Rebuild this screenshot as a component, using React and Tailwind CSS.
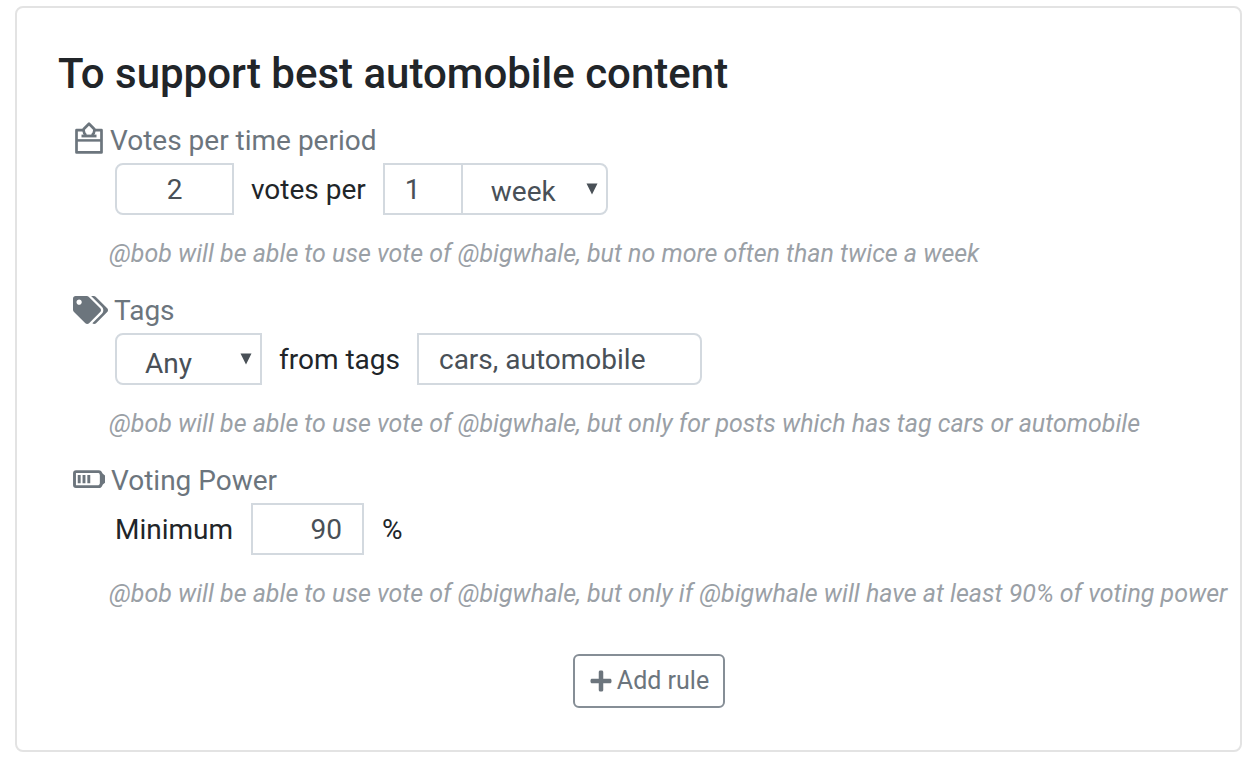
import { FaTags, FaPlus } from "react-icons/fa";

function BallotIcon() {
  return (
    <svg viewBox="0 0 28 32" className="h-8 w-7 shrink-0" fill="none" stroke="currentColor" aria-hidden="true">
      <path d="M8.5 8.2H1.5V30.4H26.5V8.2H19.5" strokeWidth="2.7" strokeLinejoin="round" />
      <path d="M1 18.4H27" strokeWidth="2.5" />
      <path d="M6.5 14H21.5" strokeWidth="2.8" />
      <path d="M11 13.2Q8 10.5 8.8 7L14 1.8L19.2 7Q20 10.5 17 13.2" strokeWidth="2.7" strokeLinejoin="round" />
    </svg>
  );
}

function BatteryIcon() {
  return (
    <svg viewBox="0 0 32 20" className="h-5 w-8 shrink-0" fill="none" stroke="currentColor" aria-hidden="true">
      <path d="M3 1.6H25.5Q28 1.6 28.3 5V13.5Q28 16.6 25.5 16.6H3Q1.5 16.6 1.5 15V3.2Q1.5 1.6 3 1.6Z" strokeWidth="2.9" />
      <path d="M27 3.5H29.5L32 5.5V12.7L29.5 14.7H27Z" fill="currentColor" stroke="none" />
      <path d="M6.2 5V13.2M11 5V13.2M15.8 5V13.2" strokeWidth="2.9" />
    </svg>
  );
}

function Rule({ icon, title, hint, children }) {
  return (
    <section className="mb-6">
      <h2 className="flex h-[34px] items-center text-[28px] text-[#6c757d]">
        {icon}
        <span className="ml-1.5 pt-0.5">{title}</span>
      </h2>
      <div className="mt-1.5 ml-[42px] flex h-[52px] items-stretch text-[28px] text-[#212529]">{children}</div>
      <p className="mt-6 ml-9 text-[25px] leading-[30px] whitespace-nowrap text-[#9aa0a6] italic">{hint}</p>
    </section>
  );
}

function Select({ label, options, className, textClass }) {
  return (
    <div className={"relative border-2 border-[#d3d9df] " + className}>
      <select aria-label={label} className={"size-full appearance-none bg-transparent text-[#495057] outline-none " + textClass}>
        {options.map((o) => (
          <option key={o}>{o}</option>
        ))}
      </select>
      <svg viewBox="0 0 12 12" className="pointer-events-none absolute top-[18px] right-2 size-3" fill="#495057" aria-hidden="true">
        <path d="M0.5 0.5H11.5L6 11.5Z" />
      </svg>
    </div>
  );
}

export default function App() {
  return (
    <main className="bg-white pt-1.5 pr-[18px] pl-[15px] font-['Roboto',sans-serif]">
      <div className="rounded-lg border-2 border-[#e3e3e3] pt-[41px] pb-[42px] pl-[41px]">
        <h1 className="mb-6 text-[42px] leading-[50px] font-medium text-[#212529]">To support best automobile content</h1>
        <div className="pl-[15px]">
          <Rule
            icon={<span className="mr-px mb-1 ml-0.5 flex"><BallotIcon /></span>}
            title="Votes per time period"
            hint="@bob will be able to use vote of @bigwhale, but no more often than twice a week"
          >
            <input aria-label="Number of votes" defaultValue="2" className="w-[119px] rounded-l-lg border-2 border-[#d3d9df] pt-0.5 text-center text-[#495057] outline-none" />
            <span className="flex items-center px-[17px] pt-0.5">votes per</span>
            <input aria-label="Number of periods" defaultValue="1" className="w-20 border-2 border-[#d3d9df] pt-0.5 pl-5 text-[#495057] outline-none" />
            <Select label="Period" options={["week", "day", "month"]} className="-ml-0.5 w-[147px] rounded-r-lg" textClass="pt-1.5 pl-7" />
          </Rule>
          <Rule
            icon={<FaTags className="h-7 w-[35px]" aria-hidden="true" />}
            title="Tags"
            hint="@bob will be able to use vote of @bigwhale, but only for posts which has tag cars or automobile"
          >
            <Select label="Tag match" options={["Any", "All"]} className="w-[147px] rounded-l-lg" textClass="pt-2 pl-7" />
            <span className="flex items-center px-[17px] pt-0.5">from tags</span>
            <input aria-label="Tags" defaultValue="cars, automobile" className="w-[285px] rounded-r-lg border-2 border-[#d3d9df] pt-0.5 pl-5 text-[#495057] outline-none" />
          </Rule>
          <Rule
            icon={<BatteryIcon />}
            title="Voting Power"
            hint="@bob will be able to use vote of @bigwhale, but only if @bigwhale will have at least 90% of voting power"
          >
            <label htmlFor="power" className="flex items-center pt-0.5 pr-[18px]">Minimum</label>
            <input id="power" defaultValue="90" className="w-[113px] border-2 border-[#d3d9df] pt-0.5 pr-5 text-right text-[#495057] outline-none" />
            <span className="flex items-center pt-0.5 pl-[18px]">%</span>
          </Rule>
        </div>
        <div className="mt-[45px] flex justify-center">
          <button type="button" className="flex h-[54px] items-center gap-1 rounded-md border-2 border-[#868e96] px-3.5 text-[25px] text-[#6c757d]">
            <FaPlus className="size-6" aria-hidden="true" />
            Add rule
          </button>
        </div>
      </div>
    </main>
  );
}
